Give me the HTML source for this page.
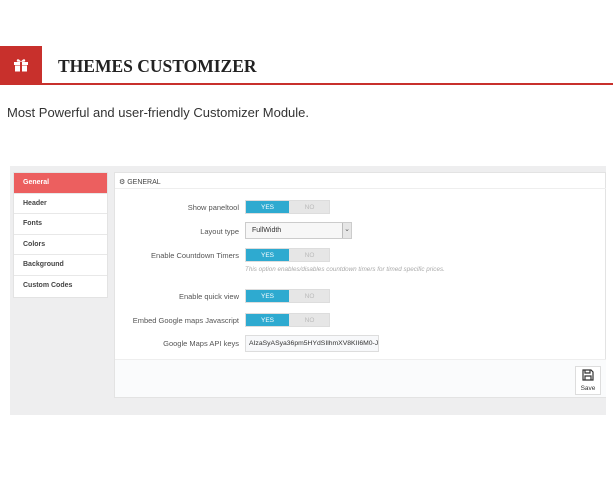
<!DOCTYPE html>
<html><head><meta charset="utf-8"><style>
*{margin:0;padding:0;box-sizing:border-box}
body{width:616px;height:478px;background:#fff;font-family:"Liberation Sans",sans-serif;position:relative;overflow:hidden}
.abs{position:absolute}
.lbl{position:absolute;font-size:7.5px;color:#555;text-align:right;width:130px;left:109px}
.tog{position:absolute;left:245px;width:85px;height:14px;background:#e6e6e6;border:1px solid #ddd;font-size:6.5px}
.tog .y{position:absolute;left:0;top:0;width:43px;height:100%;background:#2eaad0;color:#fff;text-align:center;line-height:13px}
.tog .n{position:absolute;left:43px;top:0;width:41px;height:100%;color:#bbb;text-align:center;line-height:13px}
.side div{height:20.6px;border-bottom:1px solid #e8e8e8;font-size:7px;font-weight:bold;color:#444;padding-left:9px;line-height:20px;background:#fff}
</style></head><body>
<div class="abs" style="left:0;top:46px;width:42px;height:38px;background:#c8302c"></div>
<svg class="abs" style="left:13px;top:58px" width="16" height="14" viewBox="0 0 16 14"><rect x="1" y="4" width="14" height="3" fill="#fff"/><rect x="2" y="7.5" width="12" height="6" fill="#fff"/><rect x="7" y="4" width="2" height="10" fill="#c8302c"/><path d="M8 4C6 0 3 1 4 3.5L8 4ZM8 4C10 0 13 1 12 3.5Z" fill="#fff"/></svg>
<div class="abs" style="left:0;top:83px;width:613px;height:2px;background:#c8302c"></div>
<div class="abs" style="left:58px;top:56px;font-family:'Liberation Serif',serif;font-weight:bold;font-size:17.5px;color:#222;letter-spacing:0px">THEMES CUSTOMIZER</div>
<div class="abs" style="left:7px;top:105px;font-size:13px;color:#333">Most Powerful and user-friendly Customizer Module.</div>
<div class="abs" style="left:10px;top:166px;width:596px;height:249px;background:#eeeeef"></div>
<div class="abs side" style="left:13px;top:172px;width:95px;border:1px solid #e3e3e3">
<div style="background:#ec5f5f;color:#fff">General</div><div>Header</div><div>Fonts</div><div>Colors</div><div>Background</div><div style="border:0">Custom Codes</div></div>
<div class="abs" style="left:114px;top:172px;width:492px;height:226px;background:#fff;border:1px solid #e3e3e3"></div>
<div class="abs" style="left:115px;top:188px;width:491px;height:1px;background:#eee"></div>
<div class="abs" style="left:119px;top:178px;font-size:7px;color:#444">&#9881; GENERAL</div>
<div class="lbl" style="top:203px">Show paneltool</div>
<div class="tog" style="top:200px"><div class="y">YES</div><div class="n">NO</div></div>
<div class="lbl" style="top:227px">Layout type</div>
<div class="abs" style="left:245px;top:222px;width:107px;height:17px;background:#f7f7f7;border:1px solid #ccc;font-size:7px;color:#333;padding:4px 6px">FullWidth</div>
<div class="abs" style="left:342px;top:223px;width:9px;height:15px;background:#e6e6e6;border-left:1px solid #bbb;font-size:7px;color:#555;text-align:center;line-height:14px">&#8964;</div>
<div class="lbl" style="top:251px">Enable Countdown Timers</div>
<div class="tog" style="top:248px"><div class="y">YES</div><div class="n">NO</div></div>
<div class="abs" style="left:245px;top:266px;font-size:6.3px;font-style:italic;color:#aaa">This option enables/disables countdown timers for timed specific prices.</div>
<div class="lbl" style="top:292px">Enable quick view</div>
<div class="tog" style="top:289px"><div class="y">YES</div><div class="n">NO</div></div>
<div class="lbl" style="top:316px">Embed Google maps Javascript</div>
<div class="tog" style="top:313px"><div class="y">YES</div><div class="n">NO</div></div>
<div class="lbl" style="top:339px">Google Maps API keys</div>
<div class="abs" style="left:245px;top:335px;width:134px;height:17px;background:#f7f8fa;border:1px solid #ddd;font-size:6.8px;color:#333;padding:4px 3px;white-space:nowrap;overflow:hidden">AIzaSyASya36pm5HYdSIlhmXV8KII6M0-JC</div>
<div class="abs" style="left:115px;top:359px;width:491px;height:38px;background:#fafbfc;border-top:1px solid #eee"></div>
<div class="abs" style="left:575px;top:366px;width:26px;height:29px;background:#fff;border:1px solid #ddd"></div>
<svg class="abs" style="left:582px;top:369px" width="12" height="12" viewBox="0 0 12 12"><path d="M1 1H9L11 3V11H1Z M3 1V4H8V1 M3 11V7H9V11" fill="none" stroke="#333" stroke-width="1.2"/></svg>
<div class="abs" style="left:575px;top:385px;width:26px;text-align:center;font-size:6.5px;color:#333">Save</div>
</body></html>
